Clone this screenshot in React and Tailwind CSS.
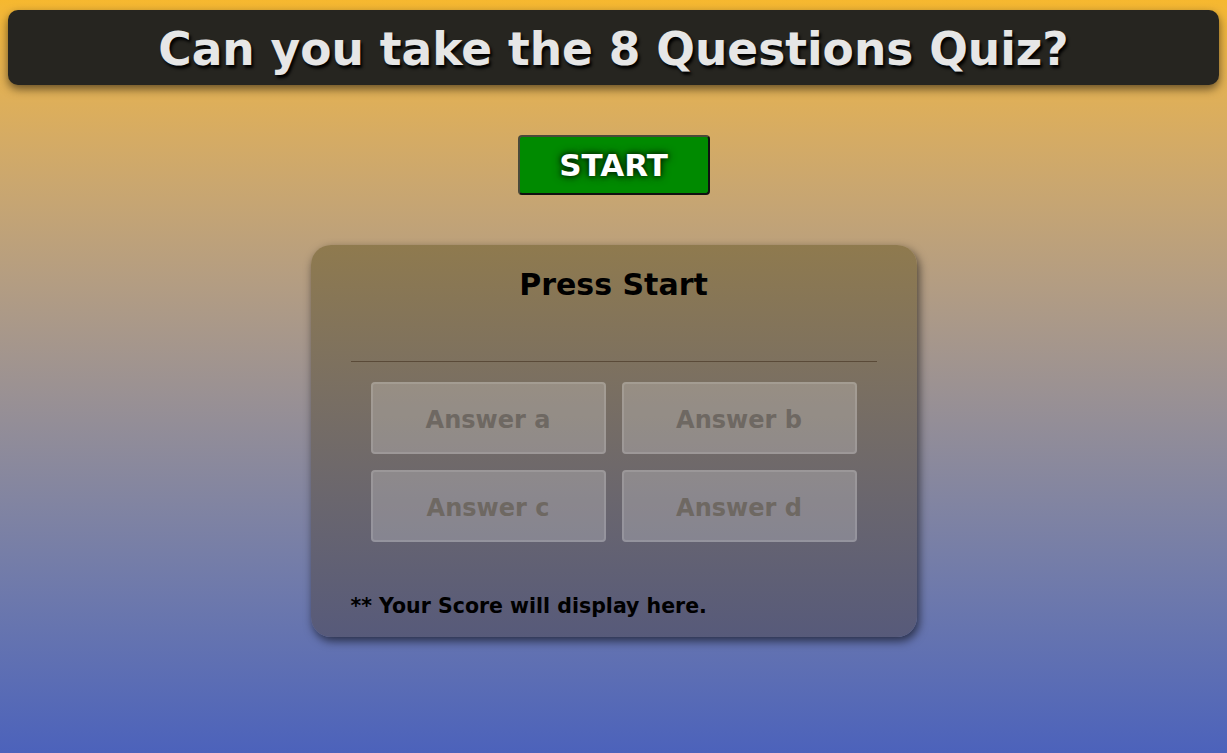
import React from 'react';

const answers = ['Answer a', 'Answer b', 'Answer c', 'Answer d'];

const App = () => {
  return (
    <div
      className="min-h-screen w-full bg-gradient-to-b from-[#f6b82f] to-[#4c62bb] font-['DejaVu_Sans',Verdana,sans-serif] flex flex-col items-center overflow-hidden"
    >
      {/* Header */}
      <div className="w-[calc(100%-16px)] mt-[10px] h-[75px] rounded-[10px] bg-[#262520] shadow-[0_4px_10px_rgba(0,0,0,0.55)] flex items-center justify-center">
        <h1 className="mt-[5px] text-[45.5px] font-bold text-[#e6e6e6] [text-shadow:2px_3px_3px_#000] leading-none">
          Can you take the 8 Questions Quiz?
        </h1>
      </div>

      {/* Start button */}
      <button className="mt-[50px] w-[192px] h-[60px] bg-[#008a00] border-2 border-[#4a4a3a] border-b-[#111] border-r-[#111] rounded-[4px] text-white text-[31px] font-bold [text-shadow:0_0_10px_#002200,0_0_5px_#002200]">
        START
      </button>

      {/* Quiz card */}
      <div className="mt-[50px] w-[606px] rounded-[20px] bg-gradient-to-b from-[#8f7a4e] to-[#575a7a] shadow-[2px_4px_10px_rgba(0,0,0,0.6)] px-[40px] pt-[22px] pb-[19px]">
        <h2 className="text-[30px] leading-[36px] font-bold text-black text-center">Press Start</h2>
        <div className="mt-[58px] h-px bg-[#5a4a38]" />
        <div className="mt-[20px] mx-auto w-[486px] grid grid-cols-2 gap-[16px]">
          {answers.map((a) => (
            <div
              key={a}
              className="h-[72px] pt-[3px] rounded-[4px] bg-[rgba(255,255,255,0.22)] border-2 border-[rgba(255,255,255,0.12)] flex items-center justify-center text-[24px] font-bold text-[#6e6862]"
            >
              {a}
            </div>
          ))}
        </div>
        <p className="mt-[52px] text-[20.5px] leading-[24px] font-bold text-black">** Your Score will display here.</p>
      </div>
    </div>
  );
};

export default App;
